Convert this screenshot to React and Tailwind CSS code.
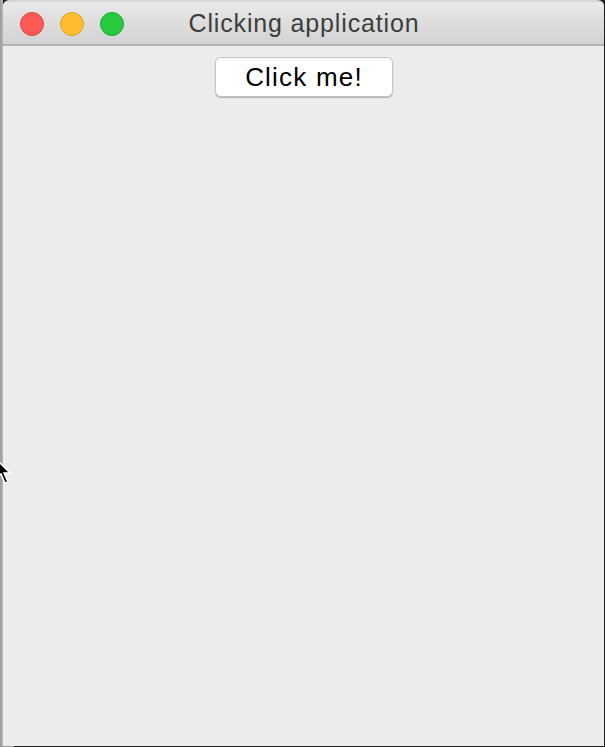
export default function App() {
  return (
    <div className="w-[605px] h-[747px] bg-[#1c1c1c] flex flex-col overflow-hidden relative" style={{ fontFamily: '"Liberation Sans", Arial, sans-serif' }}>
      <div className="flex flex-1 min-h-0">
        <div className="w-[3px] bg-gradient-to-r from-[#9a9a9a] to-[#b8b8b8] shrink-0" />
        <div className="flex-1 flex flex-col bg-[#ececec] rounded-tl-[6px] rounded-tr-[6px] overflow-hidden border-t-[2px] border-[#d6d6d6]">
          <div className="h-[44px] shrink-0 flex items-center relative bg-gradient-to-b from-[#e9e9e9] to-[#d2d2d2] border-b-[2px] border-[#b3b3b3]">
            <div className="flex gap-[16px] pl-[17px] pt-[1px]">
              <div className="w-[24px] h-[24px] rounded-full bg-[#fd5b55] border border-[#e0443e]" />
              <div className="w-[24px] h-[24px] rounded-full bg-[#fdbd2e] border border-[#dea123]" />
              <div className="w-[24px] h-[24px] rounded-full bg-[#28c83f] border border-[#1aab29]" />
            </div>
            <div className="absolute inset-0 flex items-center justify-center pl-[1px] pt-[1px] text-[25px] text-[#3d3d3d] tracking-[0.85px]">
              Clicking application
            </div>
          </div>
          <div className="flex-1 flex flex-col items-center pt-[11px] pl-[1px]">
            <div className="w-[178px] h-[40px] bg-white rounded-[6px] border border-[#c4c4c4] shadow-[0_1px_1px_rgba(0,0,0,0.25)] flex items-center justify-center text-[26px] text-black tracking-[1.2px]">
              Click me!
            </div>
          </div>
        </div>
        <div className="w-px bg-[#1c1c1c] shrink-0" />
      </div>
      <div className="h-px shrink-0 flex">
        <div className="w-[14px] bg-[#9a9a9a]" />
        <div className="flex-1 bg-[#1c1c1c]" />
      </div>
      <svg className="absolute left-0 top-[455px]" width="14" height="32" viewBox="0 0 14 32">
        <path d="M-6 2 L10 18 L4 18 L8 27 L5 28 L1 19 L-6 24 Z" fill="#000" stroke="#fff" strokeWidth="1.5" />
      </svg>
    </div>
  );
}
